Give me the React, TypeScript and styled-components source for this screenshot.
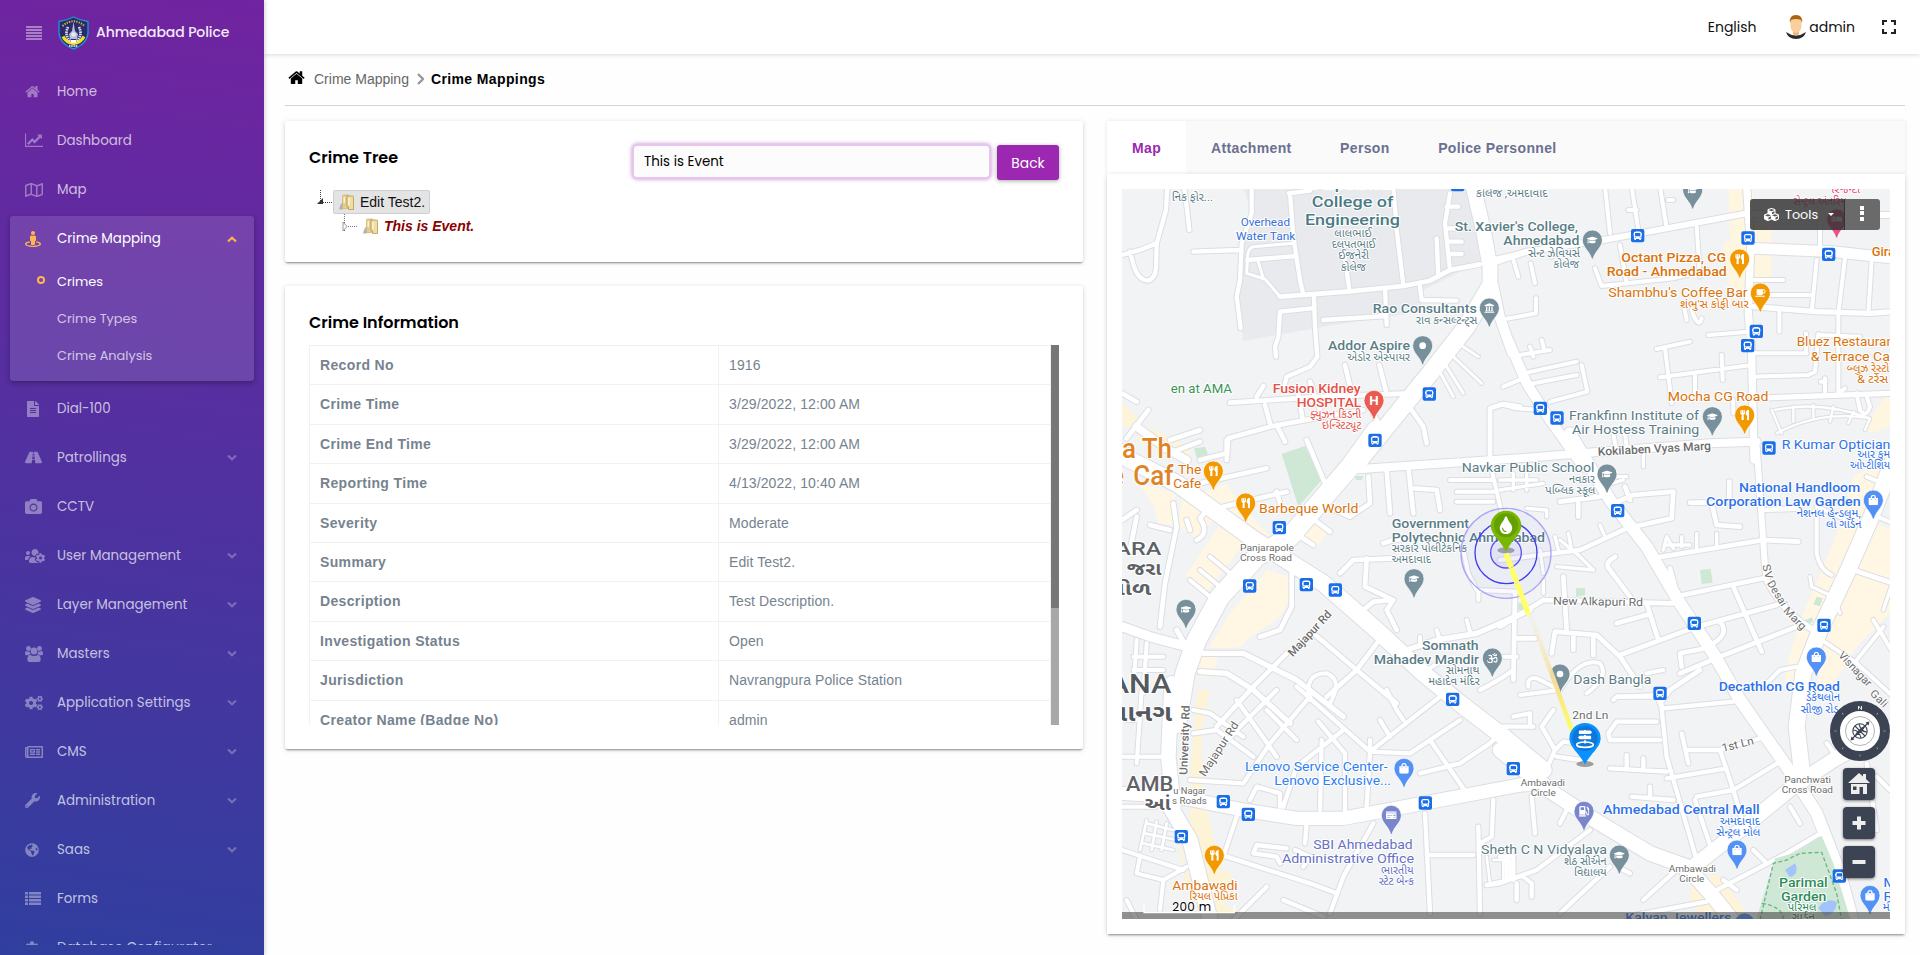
import React from "react";
import styled, { createGlobalStyle } from "styled-components";
import {
  FaRegMap, FaStreetView, FaFileAlt, FaRoad, FaCamera, FaUsersCog, FaLayerGroup, FaCogs, FaRegNewspaper,
  FaWrench, FaGlobeAmericas, FaCog, FaCubes, FaUtensils, FaCoffee, FaGraduationCap, FaUniversity,
  FaShoppingBag, FaGasPump, FaBus, FaMapSigns, FaTint, FaBed, FaOm, FaMoneyCheck,
} from "react-icons/fa";

const ui = `Poppins, Inter, "Noto Sans", sans-serif`;
const arial = `Arial, "Liberation Sans", sans-serif`;

const Global = createGlobalStyle`
  * { box-sizing: border-box; }
  body { margin: 0; background: #fefefe; font-family: ${arial}; font-size: 14px; color: #000; overflow: hidden; }
`;

const Page = styled.div`
  display: flex;
  width: 1920px;
  height: 955px;
  overflow: hidden;
`;

/* ---------- Sidebar ---------- */
const Sidebar = styled.aside`
  width: 264px;
  height: 955px;
  flex: none;
  background: linear-gradient(188deg, #7123a0 0%, #303f9f 100%);
  box-shadow: 0 0 5px rgba(0, 0, 0, 0.25);
  font-family: ${ui};
  z-index: 2;
`;
const Brand = styled.div`
  height: 66px;
  display: flex;
  align-items: center;
  padding-left: 26px;
  padding-bottom: 2px;
  color: #f3e9f8;
  font-size: 14px;
  font-weight: 500;
  letter-spacing: -0.1px;
  svg:first-child { margin: 2px 16px 0 0; }
  svg:nth-child(2) { margin: 1px 7px 0 0; }
`;
const Nav = styled.nav`
  height: 879px;
  padding-top: 1px;
  overflow: hidden;
`;
const NavItem = styled.div<{ $active?: boolean }>`
  display: flex;
  align-items: center;
  height: ${(p) => (p.$active ? 46 : 49)}px;
  padding: 0 ${(p) => (p.$active ? 17 : 27)}px 0 ${(p) => (p.$active ? 15 : 25)}px;
  color: ${(p) => (p.$active ? "#fff" : "rgba(255,255,255,.7)")};
  font-size: 13.4px;
`;
const NavIcon = styled.span<{ $active?: boolean }>`
  width: 32px;
  height: 18px;
  display: flex;
  align-items: center;
  font-size: 15px;
  color: ${(p) => (p.$active ? "#ffb74d" : "rgba(255,255,255,.38)")};
`;
const NavText = styled.span`
  flex: 1;
  white-space: nowrap;
`;
const ActiveGroup = styled.div`
  margin: 2px 10px 3px;
  height: 165px;
  border-radius: 3px;
  background: rgba(255, 255, 255, 0.12);
  box-shadow: 0 2px 5px rgba(0, 0, 0, 0.3);
`;
const SubItem = styled.div<{ $active?: boolean }>`
  display: flex;
  align-items: center;
  height: 37px;
  padding: 2px 0 0 27px;
  font-size: 12.9px;
  color: ${(p) => (p.$active ? "#fff" : "rgba(255,255,255,.7)")};
`;
const SubMark = styled.span<{ $active?: boolean }>`
  width: 8px;
  height: 8px;
  margin: 0 12px 4px 0;
  border-radius: 50%;
  border: 2px solid ${(p) => (p.$active ? "#ffb74d" : "transparent")};
`;

/* ---------- Main ---------- */
const Main = styled.main`
  flex: 1;
  display: flex;
  flex-direction: column;
`;
const Header = styled.header`
  height: 54px;
  display: flex;
  align-items: center;
  justify-content: flex-end;
  padding-right: 24px;
  background: #fff;
  box-shadow: 0 1px 4px rgba(0, 0, 0, 0.14);
  font-family: ${ui};
  font-size: 14px;
  color: #111;
`;
const HeaderText = styled.span<{ $gap: number }>`
  margin-right: ${(p) => p.$gap}px;
`;
const Crumbs = styled.div`
  display: flex;
  align-items: center;
  height: 52px;
  margin: 0 15px 15px 21px;
  padding: 0 0 1px 3px;
  border-bottom: 1px solid #d3d3d3;
  color: #666;
  svg:first-child { margin: -4px 9px 0 0; color: #000; }
  svg:nth-of-type(2) { margin: 0 7px 0 8px; }
  b { color: #000; letter-spacing: 0.38px; }
`;
const Columns = styled.div`
  display: flex;
  gap: 24px;
  margin-left: 21px;
  align-items: flex-start;
`;
const Left = styled.div`
  width: 798px;
  display: flex;
  flex-direction: column;
  gap: 24px;
`;
const Card = styled.section<{ $h: number }>`
  height: ${(p) => p.$h}px;
  background: #fff;
  border-radius: 2px;
  padding: 23px 24px 0;
  box-shadow: 0 2px 2px -1px rgba(0, 0, 0, 0.38), 0 1px 5px rgba(0, 0, 0, 0.16);
`;
const CardHead = styled.div`
  display: flex;
  height: 40px;
`;
const Title = styled.h2`
  flex: 1;
  margin: 0;
  font: 600 16px/28px ${ui};
`;
const Search = styled.div`
  width: 355px;
  height: 31px;
  margin: 2px 8px 0 0;
  padding-left: 10px;
  border-radius: 3px;
  background: #fcfcfc;
  box-shadow: 0 0 0 2px #e6c6ec, 0 0 4px 2px #c48bd0;
  font: 400 13.4px/31px ${ui};
`;
const BackButton = styled.button`
  width: 62px;
  height: 35px;
  margin-top: 1px;
  padding: 2px 0 0;
  border: 0;
  border-radius: 3px;
  background: #9c27b0;
  color: #fff;
  font: 400 13.8px ${ui};
  box-shadow: 0 1px 4px rgba(0, 0, 0, 0.35);
`;
const Tree = styled.div`
  padding: 6px 0 0 8px;
`;
const TreeRow = styled.div<{ $depth: number }>`
  display: flex;
  align-items: center;
  height: 24px;
  padding-left: ${(p) => p.$depth * 24}px;
`;
const TreeLabel = styled.span<{ $selected?: boolean }>`
  display: flex;
  align-items: center;
  gap: 6px;
  height: 24px;
  padding: 0 4px 0 5px;
  border: 1px solid ${(p) => (p.$selected ? "#cfcfcf" : "transparent")};
  border-radius: 2px;
  background: ${(p) => (p.$selected ? "#e4e4e4" : "none")};
  color: ${(p) => (p.$selected ? "#111" : "#8b0000")};
  font-weight: ${(p) => (p.$selected ? 400 : 700)};
  font-style: ${(p) => (p.$selected ? "normal" : "italic")};
`;
const InfoScroll = styled.div`
  display: flex;
  height: 380px;
  margin-top: -4px;
  overflow: hidden;
`;
const Table = styled.div`
  flex: 1;
  border: solid #f0f1f2;
  border-width: 1px 1px 0 1px;
`;
const TableRow = styled.div`
  display: flex;
  height: 39.4px;
  line-height: 38px;
  border-bottom: 1px solid #f0f1f2;
  color: #76838f;
`;
const KeyCell = styled.div`
  width: 409px;
  padding-left: 10px;
  font-weight: 700;
  letter-spacing: 0.35px;
  border-right: 1px solid #f0f1f2;
`;
const ValueCell = styled.div`
  padding-left: 10px;
  letter-spacing: 0.1px;
`;
const ScrollTrack = styled.div`
  width: 8px;
  background: #a8a8a8;
`;
const ScrollThumb = styled.div`
  height: 263px;
  background: #777;
`;

const Right = styled.div`
  width: 798px;
`;
const Tabs = styled.div`
  display: flex;
  height: 53px;
  background: #fafafa;
  box-shadow: 0 0 4px rgba(0, 0, 0, 0.1);
`;
const Tab = styled.div<{ $active?: boolean }>`
  padding: 0 ${(p) => (p.$active ? 25 : 23.5)}px 0 25px;
  line-height: 54px;
  font-weight: 700;
  letter-spacing: 0.35px;
  color: ${(p) => (p.$active ? "#9c27b0" : "#6b7090")};
  background: ${(p) => (p.$active ? "#fff" : "none")};
`;
const MapCard = styled.section`
  position: relative;
  height: 760px;
  padding: 15px;
  background: #fff;
  box-shadow: 0 2px 2px -1px rgba(0, 0, 0, 0.38), 0 1px 5px rgba(0, 0, 0, 0.16);
  > svg { display: block; }
`;
const MapTools = styled.div`
  position: absolute;
  top: 25px;
  right: 25px;
  display: flex;
  height: 31px;
  border-radius: 3px;
  overflow: hidden;
  font: 400 12.8px/32px ${ui};
  color: #fff;
`;
const ToolsButton = styled.div`
  display: flex;
  align-items: center;
  width: 95px;
  padding-left: 14px;
  gap: 6px;
  background: rgba(50, 50, 50, 0.83);
  border-right: 1px solid #333;
`;
const Caret = styled.span`
  margin-left: 4px;
  border: 3px solid transparent;
  border-top-color: #fff;
  border-bottom: 0;
`;
const MoreButton = styled.div`
  display: flex;
  flex-direction: column;
  align-items: center;
  justify-content: center;
  gap: 1.5px;
  width: 35px;
  padding: 0 1px 3px 0;
  background: #6a6a6a;
  i { width: 4px; height: 4px; background: #fff; }
`;
const MapControls = styled.div`
  position: absolute;
  right: 15px;
  top: 527px;
  width: 60px;
  display: flex;
  flex-direction: column;
  align-items: center;
  gap: 7px;
`;
const MapButton = styled.div`
  width: 32px;
  height: 32px;
  margin-left: -2px;
  display: flex;
  align-items: center;
  justify-content: center;
  border-radius: 4px;
  background: #3c4454;
  box-shadow: 0 1px 3px rgba(0, 0, 0, 0.5);
`;

/* ---------- Small icons ---------- */
const HomeGlyph = ({ size = 15 }: { size?: number }) => (
  <svg width={size} height={size} viewBox="40 200 1710 1360" fill="currentColor" preserveAspectRatio="xMidYMid meet">
    <path d="M1472 992v480q0 26-19 45t-45 19h-384v-384h-256v384h-384q-26 0-45-19t-19-45v-480q0-1 .5-3t.5-3l575-474 575 474q1 2 1 6zm223-69l-62 74q-8 9-21 11h-3q-13 0-21-7l-692-577-692 577q-12 8-24 7-13-2-21-11l-62-74q-8-10-7-23.5t11-21.5l719-599q32-26 76-26t76 26l244 204v-195q0-14 9-23t23-9h192q14 0 23 9t9 23v408l219 182q10 8 11 21.5t-7 23.5z" />
  </svg>
);
const LineChart = () => (
  <svg width="18" height="15" viewBox="0 0 2048 1600" fill="currentColor">
    <path d="M2048 1408v128h-2048v-1536h128v1408h1920zM1920 160v435q0 21-19.5 29.5t-35.5-7.5l-121-121-633 633q-10 10-23 10t-23-10l-233-233-416 416-192-192 585-585q10-10 23-10t23 10l233 233 464-464-121-121q-16-16-7.5-35.5t29.5-19.5h435q14 0 23 9t9 23z" />
  </svg>
);
const MenuGlyph = () => (
  <svg width="16" height="14" viewBox="0 0 16 14" fill="rgba(255,255,255,.42)">
    {[0, 3, 6, 9, 12].map((y) => <rect key={y} y={y} width="16" height="2" />)}
  </svg>
);
const ListGlyph = () => (
  <svg width="16" height="13" viewBox="0 0 16 13" fill="currentColor">
    {[0, 3.5, 7, 10.5].map((y) => <path key={y} d={`M0 ${y}h3v2.500h-3z M4 ${y}h12v2.500h-12z`} />)}
  </svg>
);
const GroupGlyph = () => (
  <svg width="18" height="16" viewBox="0 0 18 16" fill="currentColor">
    <circle cx="3.500" cy="2.500" r="2.400" />
    <circle cx="14.500" cy="2.500" r="2.400" />
    <circle cx="9" cy="5" r="3.400" />
    <path d="M0 8 Q0 5 1.500 5 Q3.500 6 4.800 5.400 Q5 7.200 6 8.300 Q4.500 8.300 3.600 9.300 H1.500 Q0 9.300 0 8Z M18 8 Q18 5 16.500 5 Q14.500 6 13.200 5.400 Q13 7.200 12 8.300 Q13.500 8.300 14.400 9.300 H16.500 Q18 9.300 18 8Z" />
    <path d="M2.300 13.500 Q2.300 9 5.300 9 Q9 11 12.700 9 Q15.700 9 15.700 13.500 Q15.700 16 13.300 16 H4.700 Q2.300 16 2.300 13.500Z" />
  </svg>
);
const Badge = () => (
  <svg width="31" height="34" viewBox="0 0 31 34">
    <path d="M1 5.500 Q9 4.500 15.500 1 Q22 4.500 30 5.500 V17 Q29 28 15.500 33 Q2 28 1 17Z" fill="#2b2a6b" stroke="#1f8fd6" strokeWidth="1.400" />
    <path d="M4.500 10 Q15.500 .5 26.500 10" fill="none" stroke="#c9bc33" strokeWidth="2" strokeDasharray="1.300 1.200" />
    <path d="M5 20.500 Q8 26.500 15.500 27.500 Q23 26.500 26 20.500" fill="none" stroke="#f2e21c" strokeWidth="3.200" />
    <path d="M10 11 Q6 19 12.500 25.500 M21 11 Q25 19 18.500 25.500" fill="none" stroke="#dfe3f2" strokeWidth="2.600" strokeDasharray="1.500 .8" />
    <path d="M15.500 6 L16.500 12 L17 15 L20 18 L19 23 H12 L11 18 L14 15 L14.500 12Z" fill="#b9bdd8" />
    <circle cx="15.500" cy="18.500" r="2.200" fill="#e9ebf7" />
    <path d="M13 24 H18 V27 H13Z" fill="#fff" />
    <path d="M11 30 H20" stroke="#fff" strokeWidth="1.500" strokeDasharray="1.500 .7" />
  </svg>
);
const Chevron = ({ up }: { up?: boolean }) => (
  <svg width="10" height="7" viewBox="0 0 10 7" fill="none" stroke={up ? "#ffb74d" : "rgba(255,255,255,.28)"} strokeWidth="2.200">
    <path d={up ? "M1 5.500 L5 1.800 L9 5.500" : "M1 1.500 L5 5.200 L9 1.500"} />
  </svg>
);
const Avatar = () => (
  <svg width="20" height="24" viewBox="0 0 20 24">
    <path d="M0 17 Q10 24 20 17 Q18 24 10 24 Q2 24 0 17Z" fill="#2b2b2b" />
    <path d="M7 14h6v5q-3 3-6 0z" fill="#eeb57e" />
    <path d="M4.500 5 Q10 0 15.500 5 V11 Q15 17 10 18 Q5 17 4.500 11Z" fill="#fbcf9d" />
    <path d="M4 8 Q3 0 10 0 Q17 0 16 8 L15 5 Q10 3 5 5Z" fill="#a8640f" />
  </svg>
);
const Folder = () => (
  <svg width="15" height="17" viewBox="0 0 15 17">
    <path d="M0 15.500 Q1 10 4 8 V15.500Z" fill="#b4b4b4" />
    <path d="M3.500 2 Q3.500 1 4.500 1 H9.500 V14.500 H3.500Z" fill="#e3cd92" stroke="#cdb26b" strokeWidth=".7" />
    <path d="M8 2 H13.500 Q14.500 2 14.500 3 V15.500 H9.500 V13 H8Z" fill="#f0dda0" stroke="#b08d45" strokeWidth=".7" />
    <path d="M10 4 V11 M5.200 3 V9" stroke="#fffbe8" strokeWidth="1.200" />
  </svg>
);

/* ---------- Map drawing: every tile uses 3 units per pixel ---------- */
type Tile = "A" | "B" | "C" | "D" | "E" | "F";
const origin: Record<Tile, [number, number]> = {
  A: [-36, -27], B: [1134, -27], C: [-36, 753], D: [1134, 753], E: [-36, 1503], F: [1134, 1503],
};
const at = (t: Tile) => `translate(${origin[t][0]} ${origin[t][1]})`;

const areas: [Tile, string, string][] = [
  ["A", "#e8eaee", "M400 20 L1080 20 L1110 245 L1020 290 L940 330 L930 395 L640 440 L400 483 L385 330 L400 190 L425 100Z"],
  ["A", "#fdf4da", "M36 670 L85 715 L60 745 L36 735Z M75 775 L120 745 L240 800 L240 830 L180 835Z"],
  ["A", "#cfe8d6", "M252 805 L285 800 L295 826 L260 833Z"],
  ["B", "#fff6e0", "M685 20 L760 20 L765 240 L745 330 L690 330 L670 190 L690 180Z M762 95 h52 v215 h-52z M1155 650 L1170 650 V740 L1110 760 L1100 730Z"],
  ["C", "#fff7e3", "M85 130 L195 160 L190 255 L145 250 L130 195Z M215 175 L310 240 L260 295 L205 260Z M265 165 L345 130 L400 200 L480 290 L410 290 L300 200Z M335 245 L410 300 L290 460 L225 410Z M590 235 L655 270 L620 325 L555 290Z M500 385 L640 390 L625 420 L560 395Z M470 390 L540 410 L540 470 L510 530 L410 600 L390 622 L295 625 L360 520 L440 430Z M270 645 L325 645 L310 710 L265 710Z"],
  ["C", "#cfe8d6", "M515 42 L585 18 L635 120 L565 200Z M735 108 L760 108 L755 120 L738 120Z"],
  ["D", "#fff7e3", "M1060 110 L1150 60 L1170 60 L1100 230 L1030 390 L930 580 L890 700 L860 680 L900 540 L1000 310Z M1110 240 L1170 270 L1170 520 L1070 620 L1020 700 L950 780 L960 600 L1060 400Z M860 680 h40 v60 h-45z"],
  ["D", "#cfe8d6", "M600 390 L632 386 L638 428 L605 432Z M228 444h27v22l-27 4z M950 470l18 5l-8 24l-20-6z M915 540l22-8l2 14l-20 6z M55 490h20l-5 20h-15z"],
  ["E", "#fdf3d6", "M158 140h20v80h-20z M262 0 L300 0 L275 120 L275 300 L335 540 L365 550 L345 650 L400 665 L280 690 L240 400 L240 260Z M180 360 L250 600 L250 690 L200 440Z"],
  ["F", "#fff4d8", "M575 590 L650 550 L740 670 L745 690 L620 690 L570 640Z"],
];

const roads: [Tile, number, string][] = [
  ["A", 13, "M172 20 L168 90 L140 190 L95 208 L36 225 M60 215 L72 260 Q85 300 115 302 Q135 295 138 265 L140 190 M222 20 L230 80 L238 150 M425 20 L425 100 L395 190 L390 300 L380 350 L392 445 M250 215 L390 210 M540 40 L550 170 L570 300 L580 345 M412 240 L560 228 M536 40 L600 32 M700 200 L718 330 M850 20 L860 150 L880 315 M612 350 L615 440 L622 530 L600 560 L530 590 L520 630 M605 385 L510 395 L505 470 L495 500 L498 530 M640 420 L830 408 M825 325 L830 435 M930 320 L935 360 L1040 362 M980 175 L985 290 M1020 40 L1005 130 L1020 270 M1010 80h35 M1015 145h35 M1015 185h40 M1020 222h35"],
  ["A", 9, "M445 245 L460 297 M550 190 L430 200 Q412 205 412 240 L410 280 L465 297 L510 350"],
  ["A", 14, "M510 350 L720 334 L880 318 L960 302 L1020 270 L1110 253 M1145 240 L1250 215 M360 668 L640 650 L900 640 M440 650 L460 618 M705 555 L725 640 M808 555 L830 640 M465 675 L480 730 M500 735 L525 785 M565 640 L578 720 M600 605 L630 690 M350 840 L355 775 L480 740 L640 710 L760 690 M180 780 L270 750 M190 815 L270 785 M36 640 L80 665 M50 775 L115 690 M905 690 L940 740 L950 790 M790 700 L810 740 M1140 850 L1140 685 L1180 672 L1230 680"],
  ["A", 9, "M970 540 L1030 650 M1010 560 L1060 640 M1030 530 L1115 610 M1060 500 L1105 530"],
  ["A", 24, "M80 740 L160 800 L230 840"],
  ["A", 44, "M1085 0 L1120 150 L1140 260 L1140 350"],
  ["A", 52, "M1140 320 L1070 440 L960 580 L740 850"],
  ["A", 26, "M1155 330 L1175 430 L1205 520"],
  ["B", 18, "M-10 245 L80 215 L310 180 L500 145 L740 100 L900 110 M1140 105 L1170 105"],
  ["B", 22, "M740 20 L752 200 L745 400 L755 520 L762 840"],
  ["B", 32, "M760 205 L1000 215 L1180 235"],
  ["B", 16, "M760 380 L950 395 L1110 400 L1180 395 M760 655 L1180 640"],
  ["B", 12, "M315 20 L330 160 M395 20 L415 150 M480 20 L500 145 M505 60 h15 M385 90 h25 M590 140 L600 290 M360 195 L378 300 M285 265 L305 318 L520 295 L620 270 M960 130 L960 200 M950 240 L935 395 M1035 235 L1015 400 L1015 640 M1115 240 L1105 400 M755 300 h95 M760 345 h170 M838 395 v60 M550 370 L560 420 M575 390 Q595 450 605 415 M625 465 L745 455 M470 507 L570 485 M495 505 L515 670 M665 525 L668 600 M480 592 L755 555 M585 580 v60 M755 520 L920 520 M918 460 v60 M955 462 L945 575 L925 585 L760 590 M975 595 v40 M962 605h15 M1070 640 L1080 690 Q1100 715 1110 680 L1100 650 M960 465 L1080 470 M1015 640 L1035 625 M92 250 L105 310 M40 240 L55 290 M150 200 L155 230"],
  ["B", 7, "M825 690 Q960 660 1110 715 M830 760 Q960 690 1110 715 M815 690 L845 760 M880 680 v45 M940 675 v45 M1000 680 l-10 45 M1060 695 l-15 35 M1110 715 L1095 750"],
  ["B", 12, "M0 420 L108 400 L108 355 M60 525 L150 510 M90 500 L100 530 M125 480 l8 30 M70 580 L230 545 M90 612 L230 585 M245 555 L262 635 L150 665 M10 620 L80 590 M0 672 L50 685 L120 690 M340 760 L350 820 M375 760 L380 800 M700 660 L700 700"],
  ["B", 30, "M-30 330 L20 470 L80 610 L150 720 L250 860"],
  ["C", 24, "M740 88 L1230 55 L1470 35 L1800 10 L1940 5"],
  ["C", 14, "M190 190 L200 260 L165 430 L150 560 M36 240 L80 210 M120 255 L180 270 M60 330 L80 230 M545 380 L545 500 L510 570 L450 590 M610 580 L740 690 L860 790 M800 610 L740 690 L650 770 M530 640 L430 740 L320 860 M690 400 L730 360 L850 355 M770 355 L765 440 L850 480 L830 510 L860 570 M760 510 L790 485 L850 480 M690 490 L750 530 M830 90 L840 220 M895 80 L910 220 M915 145 L980 150 L990 210 M775 110 L780 190 L720 230 L640 195 M590 0 L645 130 M320 205 L530 155 M500 155 L510 190 M270 130 L470 85 M600 230 L660 275 M555 280 L610 315 M240 270 L230 240 M350 0 L350 40 L270 60 M300 200 L270 235 Q300 280 260 300 M820 310 L850 300 L950 290"],
  ["C", 16, "M860 640 L980 600 L1100 580 L1170 550 L1260 510 M280 640 L400 640 L560 720 L700 830 M270 695 L350 700 L430 750 L540 850 M240 640 L200 570"],
  ["C", 12, "M980 570 L990 600 M1070 540 L1080 575 M1140 0 v60 M1145 90 L1180 240 M1020 120h130 M1040 155h110 M1040 185h110 M1060 330 L1075 400 L1100 450 L1230 455 M1105 450 v30 M930 590 v20 M80 600 L70 750 M110 610 L100 760 M70 650h90 M70 690h90 M240 420 L300 470 M270 390 L330 440 M300 350 L360 400 M1180 650 h40 M950 690 L1000 660 M600 780 Q580 700 650 700 Q700 720 660 790"],
  ["C", 28, "M36 560 L120 590 L250 625"],
  ["C", 50, "M-20 0 L60 60 L200 130 L420 290 L520 355 L640 430 L800 570 L940 700 L1050 790 L1180 890 L1300 990"],
  ["C", 58, "M800 -30 L720 80 L540 290 L440 350 L330 470 L260 600 L225 700 L200 850"],
  ["D", 14, "M0 560 L130 480 L520 490 M455 355 L790 300 L895 305 M535 468 L790 415 M790 210 L900 205 M360 645 L590 560 L830 495 M350 550 L440 525 M440 490 L475 600 M700 440 L785 635 M540 700 L660 650 L890 560 M640 620 L540 640 L545 680 M660 545 Q690 580 640 610 M480 790 L510 750 L600 690 M190 410 L200 570 M155 640 L165 575 L290 585 L360 650 L420 740 M220 590v40 M280 590v55 M345 350 Q310 370 330 390 L390 470 M340 190 L400 165 L520 155 L515 235 L380 265 L240 330 L0 360 M375 140 L390 180 M180 185 L300 170 M235 190v40 M570 188h60 M635 190 L650 255 L720 260 M688 125v60 M45 460 L40 720 M45 595h60 M510 385 L525 440 M1060 390 L1180 430"],
  ["D", 10, "M490 330 L500 290 L520 325 M545 290 v30 M570 315 h-70 M590 280v50 M650 280v40 M165 290 L175 330 M205 280 L215 330 M230 340 L280 390 L170 380 M240 350 L180 300 M300 255 L315 290 M80 205 L140 210 L140 230 M0 120 L110 120 M0 150 L130 130 M40 100 v50 M80 100 v50 M930 410 L935 440 L1000 470 L1020 520 M1150 510 L1180 420 M120 330 L130 400 M130 420 v40 M430 40 v40 M320 110 h60 M300 140 L370 120"],
  ["D", 12, "M950 230 L950 340 Q960 390 995 405 M1040 240 L950 200 M950 590 L1070 670 L1180 770 M1120 540 L1180 640 M1150 560 L1070 660 M800 730 L840 690 L890 680 M85 740 Q80 710 110 715 L180 750 L60 765 M180 750 Q240 650 300 670 Q330 710 260 760 M1100 110 L1170 140 M1110 220 L1180 250 M350 770 L470 765 M440 700 L490 690"],
  ["D", 18, "M770 20 L795 380 L800 420 Q850 520 940 570"],
  ["D", 36, "M210 -20 L330 180 L440 320 L540 490 L640 640 L720 780 L860 980 L950 1120 L1020 1300 L1060 1450"],
  ["D", 48, "M1180 60 L1110 240 L1040 400 L960 570 L910 700 L890 860 L905 990"],
  ["E", 13, "M390 350 L340 500 M350 500 L600 580 L680 610 M790 400 L700 560 L660 670 M590 400 L585 460 M945 370 L960 670 M1105 410 L1110 670 M950 495 h140 M1150 330 L1145 440 L1110 460 M930 250 L1050 220 L1140 160 L1190 110 M960 150 L1070 310 M520 350 L560 230 L700 120 M560 -10 L780 185 L900 190 L1050 90 M780 185 L990 20 M780 185 L770 350 M705 190 L705 370 M635 150 L630 360 M625 95 L705 190 M380 30 L500 200 M250 60 L300 70 L400 140 M250 130 L320 120 L430 200 M470 60 L560 150 M810 90 L840 140 M780 150 v30 M500 0 L390 110 L310 200 M240 270 L400 280 L480 160 L600 20 M830 0 L860 60 L880 90 M420 330 L440 290 L510 310 L510 350 M430 490 L440 465 L530 475 M430 490 L500 500 L510 520 M555 480 L600 500 L580 530 M520 630 L640 680 M370 690 L470 590"],
  ["E", 12, "M95 0 L80 220 M36 200 h130 M50 90 h40 M36 480 L220 540 M90 500 L80 550 L160 570 L230 530 M160 570 L150 660 M50 630 L80 690 M36 350 h100"],
  ["E", 8, "M110 400 L190 420 M105 430 L200 450 M100 460 L190 480 M110 390 L90 480 M140 395 L125 480 M170 400 L155 480 M1130 500 L1140 580 L1240 560 M1150 510h50v50 M1180 510v60"],
  ["E", 46, "M180 350 L240 450 L300 690"],
  ["E", 40, "M36 310 L200 320 L400 360 L560 385 L700 385 L860 355 L1230 285 L1300 280"],
  ["E", 44, "M185 -20 L175 200 L190 350"],
  ["F", 13, "M95 320 L105 430 M270 420 L110 540 L0 580 L-40 585 M330 530 L180 670 M50 580v50 M70 560 L95 580 V620 M340 30 L350 20 L470 20 L490 55 L700 35 M480 10 L500 200 L590 510 M330 150 L480 150 M470 95 L350 95 L325 130 L330 150 M330 235 L500 245 M380 195 v40 M430 205 v35 M395 320 L520 330 M450 290v30 M545 130 L565 220 M560 180 L660 180 L700 300 L840 215 M500 265 L680 235 M590 320 L700 300 L735 420 M585 330 L635 480 M660 180 L780 145 M180 400 L200 360 M870 350 L900 400 M160 60 L125 110 L165 180 L125 270 M165 180 L190 155 L230 160 M170 200 L240 210 M430 630 L540 530 M670 570 L710 600 M380 680 L620 635 M760 480 L800 520 M370 540 L390 550 M0 110 L100 110 M40 80 L90 70 L90 110 M0 500 h40 M20 510 v60 M40 510 v60 M-60 0 Q0 -30 40 -60"],
  ["F", 13, "M650 600 L860 490 L970 425 M1100 220 L1130 420 M1130 260 L1170 300 M980 160 L1010 200"],
  ["F", 44, "M0 180 L130 290 L300 400 L450 490 L560 530 L640 620 L720 720"],
  ["F", 44, "M560 545 L720 420 L880 290 L1000 210 L1180 110"],
];

const slate = "#5b7d87", orange = "#d9730d", blue = "#2f72e8", grey = "#6d6d6d";
type Label = [Tile, number, number, number, string, number, string, (number | undefined)?, number?];
// tile, x, baseline, text width, text, size, colour, weight, rotation
const labels: Label[] = [
  ["A", 605, 80, 245, "College of", 46, "#4a7a84", 500],
  ["A", 585, 134, 285, "Engineering", 46, "#4a7a84", 500],
  ["A", 600, 28, 245, "Dalpatbhai", 44, "#4a7a84", 500],
  ["A", 673, 170, 112, "લાલભાઈ", 34, slate],
  ["A", 665, 204, 132, "દલપતભાઈ", 34, slate],
  ["A", 685, 238, 92, "ઈજનેરી", 34, slate],
  ["A", 692, 272, 76, "કોલેજ", 34, slate],
  ["A", 185, 62, 124, "નિક ફોર...", 34, slate],
  ["A", 392, 138, 148, "Overhead", 35, "#3a6fd8"],
  ["A", 378, 181, 178, "Water Tank", 35, "#3a6fd8"],
  ["A", 1098, 52, 215, "કોલેજ ,અમદાવાદ", 32, slate],
  ["A", 1034, 153, 370, "St. Xavier's College,", 41, slate, 500],
  ["B", 10, 196, 228, "Ahmedabad", 41, slate, 500],
  ["B", 84, 230, 156, "સેન્ટ ઝેવિયર્સ", 34, slate],
  ["B", 160, 265, 78, "કોલેજ", 34, slate],
  ["A", 788, 400, 312, "Rao Consultants", 41, slate, 500],
  ["A", 918, 431, 184, "રાવ કન્સલ્ટન્ટ્સ", 34, slate],
  ["A", 654, 511, 246, "Addor Aspire", 40, slate, 500],
  ["A", 712, 543, 188, "એડોર એસ્પાયર", 34, slate],
  ["A", 182, 640, 184, "en at AMA", 38, "#3b9455"],
  ["A", 488, 638, 264, "Fusion Kidney", 40, "#e4524a", 500],
  ["A", 560, 680, 194, "HOSPITAL", 40, "#e4524a", 500],
  ["A", 600, 714, 154, "ફ્યુઝન કિડની", 34, "#e4524a"],
  ["A", 636, 747, 118, "ઇન્સ્ટિટ્યૂટ", 34, "#e4524a"],
  ["A", 36, 835, 150, "a Th", 84, "#df8426", 500],
  ["C", 4, 136, 38, "e", 84, "#df8426", 500],
  ["C", 70, 136, 120, "Caf", 84, "#df8426", 500],
  ["C", 204, 102, 70, "The", 40, orange],
  ["C", 190, 144, 84, "Cafe", 40, orange],
  ["B", 994, 40, 86, "રિજેન્ટા", 34, "#e8457f"],
  ["B", 880, 74, 160, "સેન્ટ્રલ અંતરિમ", 34, "#e8457f"],
  ["B", 364, 247, 314, "Octant Pizza, CG", 41, orange, 500],
  ["B", 320, 289, 360, "Road - Ahmedabad", 41, orange, 500],
  ["B", 325, 352, 418, "Shambhu's Coffee Bar", 41, orange, 400],
  ["B", 540, 384, 206, "શંભુ'સ કોફી બાર", 34, orange],
  ["B", 1115, 228, 70, "Gira", 41, orange, 500],
  ["B", 890, 499, 305, "Bluez Restaurant", 41, orange, 400],
  ["B", 932, 542, 274, "& Terrace Cafe", 41, orange, 400],
  ["B", 1040, 577, 128, "બ્લુઝ રેસ્ટો", 34, orange],
  ["B", 1072, 610, 92, "& ટર્રેસ", 34, orange],
  ["B", 503, 662, 302, "Mocha CG Road", 40, orange],
  ["B", 207, 720, 390, "Frankfinn Institute of", 40, slate],
  ["B", 216, 762, 382, "Air Hostess Training", 40, slate],
  ["B", 294, 827, 340, "Kokilaben Vyas Marg", 35, grey, 500, -3],
  ["B", 845, 807, 348, "R Kumar Opticians", 40, blue],
  ["B", 1072, 835, 98, "આર કુમ", 34, blue],
  ["D", 1050, 86, 120, "ઓપ્ટીશિય", 34, blue],
  ["D", 717, 156, 364, "National Handloom", 41, blue, 500],
  ["D", 618, 198, 464, "Corporation Law Garden", 41, blue, 500],
  ["D", 890, 231, 192, "નેશનલ હેન્ડલુમ,", 34, blue],
  ["D", 978, 265, 106, "લો ગાર્ડન", 34, blue],
  ["C", 1055, 97, 398, "Navkar Public School", 40, slate, 400],
  ["D", 207, 129, 78, "નવકાર", 34, slate],
  ["D", 136, 162, 150, "પબ્લિક સ્કૂલ", 34, slate],
  ["C", 447, 219, 298, "Barbeque World", 41, orange],
  ["C", 390, 332, 162, "Panjarapole", 29, grey],
  ["C", 390, 362, 156, "Cross Road", 29, grey],
  ["C", 845, 263, 232, "Government", 40, slate, 500],
  ["C", 845, 306, 460, "Polytechnic Ahmedabad", 40, slate, 500],
  ["C", 845, 337, 226, "સરકાર પોલીટેકનિક", 34, slate],
  ["C", 845, 370, 118, "અમદાવાદ", 34, slate],
  ["C", 16, 346, 138, "ARA", 56, "#5e6266", 500],
  ["C", 50, 406, 104, "જરા", 54, "#5e6266", 700],
  ["C", 0, 466, 124, "પોળ", 54, "#5e6266", 700],
  ["C", -4, 760, 188, "ANA", 80, "#555a5e", 500],
  ["E", 0, 92, 186, "વાનગ", 70, "#555a5e", 700],
  ["E", 48, 302, 142, "AMB", 60, "#5e6266", 500],
  ["E", 104, 360, 78, "આં", 54, "#5e6266", 700],
  ["C", 548, 652, 174, "Majapur Rd", 34, grey, 500, -47],
  ["E", 232, 255, 208, "University Rd", 34, grey, 500, -88],
  ["E", 285, 262, 188, "Majapur Rd", 34, grey, 400, -57],
  ["C", 936, 629, 170, "Somnath", 41, slate, 500],
  ["C", 791, 672, 316, "Mahadev Mandir", 41, slate, 500],
  ["C", 1008, 702, 100, "સોમનાથ", 34, slate],
  ["C", 955, 735, 154, "મહાદેવ મંદિર", 34, slate],
  ["D", 159, 494, 270, "New Alkapuri Rd", 34, grey, 400, 1],
  ["D", 220, 732, 234, "Dash Bangla", 40, slate, 400],
  ["D", 787, 376, 44, "SV", 33, grey, 400, 76],
  ["D", 800, 430, 84, "Desai", 33, grey, 400, 58],
  ["D", 848, 514, 82, "Marg", 33, grey, 400, 45],
  ["D", 1013, 647, 130, "Visnagar", 33, grey, 400, 47],
  ["F", 1108, 12, 60, "Gali", 33, grey, 400, 45],
  ["D", 656, 753, 364, "Decathlon CG Road", 40, blue, 500],
  ["F", 918, 34, 102, "ડેકેથલોન", 34, blue],
  ["F", 902, 70, 114, "સીજી રોડ", 34, blue],
  ["F", 217, 87, 108, "2nd Ln", 34, grey],
  ["F", 668, 186, 98, "1st Ln", 34, grey, 400, -14],
  ["E", 190, 312, 98, "u Nagar", 29, grey],
  ["E", 186, 343, 104, "s Roads", 29, grey],
  ["E", 405, 244, 428, "Lenovo Service Center-", 40, "#2f80f0"],
  ["E", 493, 286, 350, "Lenovo Exclusive...", 40, "#2f80f0"],
  ["E", 610, 478, 298, "SBI Ahmedabad", 40, "#6670c4"],
  ["E", 516, 520, 396, "Administrative Office", 40, "#6670c4"],
  ["E", 813, 553, 98, "ભારતીય", 34, "#6670c4"],
  ["E", 806, 586, 106, "સ્ટેટ બેન્ક", 34, "#6670c4"],
  ["E", 187, 600, 196, "Ambawadi", 40, orange],
  ["E", 238, 630, 145, "રિયલ પેપ્રિકા", 32, orange],
  ["E", 1113, 493, 378, "Sheth C N Vidyalaya", 40, slate, 400],
  ["F", 192, 526, 128, "શેઠ સીએન", 33, slate],
  ["F", 222, 558, 98, "વિદ્યાલય", 33, slate],
  ["F", 62, 288, 133, "Ambavadi", 29, grey],
  ["F", 92, 317, 75, "Circle", 29, grey],
  ["F", 309, 373, 470, "Ahmedabad Central Mall", 41, blue, 500],
  ["F", 660, 406, 120, "અમદાવાદ", 34, blue],
  ["F", 649, 439, 132, "સેન્ટ્રલ મોલ", 34, blue],
  ["F", 506, 547, 142, "Ambawadi", 29, grey],
  ["F", 538, 576, 75, "Circle", 29, grey],
  ["F", 853, 280, 140, "Panchwati", 29, grey],
  ["F", 845, 309, 154, "Cross Road", 29, grey],
  ["F", 376, 696, 318, "Kalyan Jewellers", 41, blue, 500],
  ["F", 837, 591, 146, "Parimal", 41, "#2e8b57", 500],
  ["F", 843, 632, 136, "Garden", 41, "#2e8b57", 500],
  ["F", 863, 664, 86, "પરિમલ", 34, "#2e8b57"],
  ["F", 875, 692, 70, "ગાર્ડન", 34, "#2e8b57"],
  ["F", 1150, 591, 40, "M", 41, blue],
  ["F", 1150, 632, 30, "R", 41, blue],
  ["F", 1148, 662, 30, "મી", 34, blue],
];

type Glyph = React.ComponentType<{ x?: number; y?: number; size?: number; color?: string }>;
const teal = "#78909c", amber = "#f29900", azure = "#5491f5", violet = "#7986cb";
const pins: [Tile, number, number, string, Glyph | string][] = [
  ["A", 1138, 384, teal, FaUniversity], ["A", 938, 497, teal, "dot"], ["A", 792, 661, "#ea5a50", "H"],
  ["B", 578, 30, teal, FaGraduationCap], ["B", 277, 180, teal, FaGraduationCap], ["B", 719, 237, amber, FaUtensils],
  ["B", 781, 339, amber, FaCoffee], ["B", 1010, 117, "#ec4f87", FaBed], ["B", 637, 710, teal, FaGraduationCap],
  ["B", 734, 705, amber, FaUtensils], ["C", 310, 93, amber, FaUtensils], ["C", 407, 189, amber, FaUtensils],
  ["C", 912, 416, teal, FaGraduationCap], ["C", 228, 508, teal, FaGraduationCap], ["C", 1147, 654, teal, FaOm],
  ["D", 321, 102, teal, FaGraduationCap], ["D", 1120, 180, azure, FaShoppingBag], ["D", 949, 651, azure, FaShoppingBag],
  ["D", 180, 702, teal, "dot"], ["E", 882, 235, azure, FaShoppingBag], ["E", 844, 376, violet, FaMoneyCheck],
  ["E", 313, 496, amber, FaUtensils], ["F", 252, 364, violet, FaGasPump], ["F", 358, 495, teal, FaGraduationCap],
  ["F", 711, 480, azure, FaShoppingBag], ["F", 1110, 616, azure, FaShoppingBag], ["F", 734, 699, azure, "dot"],
];
const stops: [Tile, number, number][] = [
  ["A", 1043, 14], ["A", 958, 642], ["A", 795, 781], ["B", 413, 167], ["B", 744, 174], ["B", 986, 223], ["B", 769, 454],
  ["B", 743, 497], ["B", 121, 685], ["B", 171, 714], ["B", 807, 804], ["C", 508, 263], ["C", 419, 438], ["C", 589, 434],
  ["C", 676, 450], ["C", 1028, 778], ["D", 353, 212], ["D", 583, 550], ["D", 972, 556], ["D", 480, 760], ["E", 340, 335],
  ["E", 415, 373], ["E", 214, 440], ["E", 946, 339], ["E", 1210, 236], ["F", 1018, 558],
];

const drawRoads = (casing: boolean) =>
  roads.map(([t, w, d], i) => (
    <path key={i} transform={at(t)} d={d} fill="none" stroke={casing ? "#dcdee3" : "#fff"} strokeWidth={casing ? w + 6 : w}
      strokeLinecap="round" strokeLinejoin="round" />
  ));

const Pin = ({ x, y, color, glyph: G }: { x: number; y: number; color: string; glyph: Glyph | string }) => (
  <g transform={`translate(${x} ${y})`}>
    <path d="M-30 0 A30 30 0 1 1 30 0 C30 22 7 34 2 57 H-2 C-7 34 -30 22 -30 0Z" fill={color} stroke="#fff" strokeWidth="2" />
    {G === "dot" ? <circle r="10" fill="#fff" /> :
      typeof G === "string" ? <text y="14" textAnchor="middle" fontFamily="Roboto" fontWeight="700" fontSize="40" fill="#fff">{G}</text> :
      <G x={-16} y={-16} size={32} color="#fff" />}
  </g>
);

const CityMap = () => (
  <svg width="768" height="730" viewBox="0 0 2304 2190">
    <defs>
      <linearGradient id="beam" x1="0" y1="0" x2="0" y2="1">
        <stop offset="0" stopColor="#f3efdf" stopOpacity=".3" />
        <stop offset=".6" stopColor="#f8df98" />
        <stop offset="1" stopColor="#ffff60" />
      </linearGradient>
    </defs>
    <rect width="2304" height="2190" fill="#f1f3f4" />
    {areas.map(([t, c, d], i) => <path key={i} transform={at(t)} fill={c} d={d} />)}
    {drawRoads(true)}
    {drawRoads(false)}
    <g transform={at("F")}>
      <path d="M825 505 L880 490 L965 437 L1000 520 L1055 700 L765 700Z" fill="#cfe8d6" />
      <path d="M780 690 L820 520 L860 510 L900 490 L965 487 L1010 610 L1025 690 M785 640 Q850 650 850 690" fill="none" stroke="#6db583" strokeWidth="4" strokeDasharray="12 7" />
      <path d="M855 540 L885 520 Q900 550 870 562Z M860 630 L885 605 L890 625 L865 642Z M955 655 Q975 620 1010 635 Q1010 670 975 678Z" fill="#a3c4fb" />
    </g>
    {stops.map(([t, x, y], i) => (
      <g key={i} transform={`${at(t)} translate(${x} ${y})`}>
        <rect x="-20" y="-20" width="40" height="40" rx="6" fill="#1a6fe8" />
        <FaBus x={-13} y={-13} size={26} color="#fff" />
      </g>
    ))}
    {labels.map(([t, x, y, w, s, size, color, weight, rot], i) => (
      <text key={i} transform={`${at(t)} translate(${x} ${y}) rotate(${rot || 0})`} textLength={w} fontSize={size}
        fontFamily={`Roboto, "Noto Sans Gujarati", "Noto Sans", sans-serif`} fontWeight={weight || 400} fill={color}
        stroke="#fff" strokeWidth="6" strokeLinejoin="round" paintOrder="stroke" lengthAdjust="spacingAndGlyphs">{s}</text>
    ))}
    {pins.map(([t, x, y, color, g], i) => (
      <Pin key={i} x={x + origin[t][0]} y={y + origin[t][1]} color={color} glyph={g} />
    ))}
    <g transform={at("D")}>
      <circle cx="18" cy="338" r="46" fill="rgba(60,60,255,.05)" stroke="#5a50ee" strokeWidth="4" />
      <circle cx="18" cy="338" r="93" fill="none" stroke="#4038f0" strokeWidth="4" />
      <circle cx="18" cy="340" r="135" fill="rgba(60,60,255,.03)" stroke="#aaa5f5" strokeWidth="4" />
      <path d="M84 525 L96 519 L180 750 L222 870 L210 875 L165 750Z" fill="url(#beam)" />
      <ellipse cx="18" cy="331" rx="26" ry="9" fill="rgba(0,0,0,.3)" />
      <path d="M18 340 L86 525" stroke="#ffff66" strokeWidth="16" strokeDasharray="46 2" />
      <path d="M-28 258 A46 46 0 1 1 64 258 C62 285 34 300 18 336 C2 300 -26 285 -28 258Z" fill="#7ab800" />
      <circle cx="18" cy="256" r="36" fill="#64a000" />
      <FaTint x={-9} y={229} size={54} color="#fff" />
    </g>
    <g transform={at("F")}>
      <ellipse cx="255" cy="222" rx="26" ry="9" fill="rgba(0,0,0,.35)" />
      <path d="M208 146 A47 47 0 1 1 302 146 C300 175 270 190 255 224 C240 190 210 175 208 146Z" fill="#0a90ff" />
      <circle cx="255" cy="145" r="38" fill="#0d76d6" />
      <ellipse cx="255" cy="164" rx="25" ry="8" fill="none" stroke="#fff" strokeWidth="5" />
      <FaMapSigns x={234} y={119} size={42} color="#fff" />
    </g>
    <rect y="2169" width="2304" height="21" fill="rgba(60,60,60,.55)" />
    <path d="M66 2146 V2171 H337 V2146" fill="none" stroke="#fff" strokeWidth="4" />
    <text x="151" y="2165" fontFamily={ui} fontSize="36" textLength="116" stroke="#fff" strokeWidth="5" paintOrder="stroke">200 m</text>
  </svg>
);

const Compass = () => (
  <svg width="60" height="60" viewBox="-30 -30 60 60">
    <circle r="25" fill="#fff" stroke="#3c4454" strokeWidth="10" />
    <circle r="14.500" fill="none" stroke="#777d88" strokeWidth=".6" />
    {[45, 90, 135, 180, 225, 270, 315].map((a) => <rect key={a} x="-.4" y="-25.500" width=".8" height="2" fill="#a3a8b2" transform={`rotate(${a})`} />)}
    <path d="M-1.500 -21.500 V-25 L1.500 -21.500 V-25" stroke="#fff" strokeWidth=".9" fill="none" />
    <g fill="none" stroke="#3c4454" strokeWidth="1.100">
      <circle r="7.200" />
      <path d="M-8.500 8.500 L8.500 -8.500 M-5 -5 L5 5 M-5 5 Q-1.500 -1.500 5 -5 M-5 5 Q1.500 1.500 5 -5 M-7 -1 Q-1 -1 1 7 M-1 -7 Q1 1 7 1" />
    </g>
    <path d="M-9.500 9.500l1-4l3 3z M9.500 -9.500l-1 4l-3-3z" fill="#3c4454" />
  </svg>
);

type NavEntry = { label: string; icon: React.ReactNode; more?: boolean };
const topNav: NavEntry[] = [
  { label: "Home", icon: <HomeGlyph size={15} /> },
  { label: "Dashboard", icon: <LineChart /> },
  { label: "Map", icon: <FaRegMap size={18} /> },
];
const bottomNav: NavEntry[] = [
  { label: "Dial-100", icon: <FaFileAlt size={16} /> },
  { label: "Patrollings", icon: <FaRoad size={17} />, more: true },
  { label: "CCTV", icon: <FaCamera size={17} /> },
  { label: "User Management", icon: <FaUsersCog size={20} />, more: true },
  { label: "Layer Management", icon: <FaLayerGroup size={16} />, more: true },
  { label: "Masters", icon: <GroupGlyph />, more: true },
  { label: "Application Settings", icon: <FaCogs size={18} />, more: true },
  { label: "CMS", icon: <FaRegNewspaper size={18} />, more: true },
  { label: "Administration", icon: <FaWrench size={15} />, more: true },
  { label: "Saas", icon: <FaGlobeAmericas size={14} />, more: true },
  { label: "Forms", icon: <ListGlyph /> },
  { label: "Database Configurator", icon: <FaCog size={14} /> },
];
const info: [string, string][] = [
  ["Record No", "1916"], ["Crime Time", "3/29/2022, 12:00 AM"], ["Crime End Time", "3/29/2022, 12:00 AM"],
  ["Reporting Time", "4/13/2022, 10:40 AM"], ["Severity", "Moderate"], ["Summary", "Edit Test2."],
  ["Description", "Test Description."], ["Investigation Status", "Open"], ["Jurisdiction", "Navrangpura Police Station"],
  ["Creator Name (Badge No)", "admin"],
];

const NavRow = ({ item }: { item: NavEntry }) => (
  <NavItem>
    <NavIcon>{item.icon}</NavIcon>
    <NavText>{item.label}</NavText>
    {item.more && <Chevron />}
  </NavItem>
);

export default function App() {
  return (
    <Page>
      <Global />
      <Sidebar>
        <Brand><MenuGlyph /><Badge />Ahmedabad Police</Brand>
        <Nav>
          {topNav.map((n) => <NavRow key={n.label} item={n} />)}
          <ActiveGroup>
            <NavItem $active>
              <NavIcon $active><FaStreetView size={16} /></NavIcon>
              <NavText>Crime Mapping</NavText>
              <Chevron up />
            </NavItem>
            {["Crimes", "Crime Types", "Crime Analysis"].map((s, i) => (
              <SubItem key={s} $active={i === 0}><SubMark $active={i === 0} />{s}</SubItem>
            ))}
          </ActiveGroup>
          {bottomNav.map((n) => <NavRow key={n.label} item={n} />)}
        </Nav>
      </Sidebar>
      <Main>
        <Header>
          <HeaderText $gap={29}>English</HeaderText>
          <Avatar />
          <HeaderText $gap={27}>&nbsp;admin</HeaderText>
          <svg width="14" height="14" viewBox="0 0 14 14" fill="none" stroke="#222" strokeWidth="2.200">
            <path d="M1 5 V1 H5 M9 1 H13 V5 M13 9 V13 H9 M5 13 H1 V9" />
          </svg>
        </Header>
        <Crumbs>
          <HomeGlyph size={17} />
          <span>Crime Mapping</span>
          <svg width="7" height="12" viewBox="0 0 7 12" fill="none" stroke="#999" strokeWidth="2.400"><path d="M1 1 L6 6 L1 11" /></svg>
          <b>Crime Mappings</b>
        </Crumbs>
        <Columns>
          <Left>
            <Card $h={141}>
              <CardHead>
                <Title>Crime Tree</Title>
                <Search>This is Event</Search>
                <BackButton>Back</BackButton>
              </CardHead>
              <Tree>
                <TreeRow $depth={0}>
                  <svg width="16" height="24" viewBox="0 0 16 24">
                    <path d="M3.500 0 V12 M6 12.500 H16" stroke="#444" strokeDasharray="1 1" />
                    <path d="M0 14 L6 8 V14Z" fill="#333" />
                  </svg>
                  <TreeLabel $selected><Folder />Edit Test2.</TreeLabel>
                </TreeRow>
                <TreeRow $depth={1}>
                  <svg width="16" height="24" viewBox="0 0 16 24">
                    <path d="M3.500 0 V17 M5 12.500 H16" stroke="#777" strokeDasharray="1 1" />
                    <path d="M2 8 L6 12.500 L2 17Z" fill="#fff" stroke="#999" />
                  </svg>
                  <TreeLabel><Folder />This is Event.</TreeLabel>
                </TreeRow>
              </Tree>
            </Card>
            <Card $h={463}>
              <CardHead><Title>Crime Information</Title></CardHead>
              <InfoScroll>
                <Table>
                  {info.map(([k, v]) => <TableRow key={k}><KeyCell>{k}</KeyCell><ValueCell>{v}</ValueCell></TableRow>)}
                </Table>
                <ScrollTrack><ScrollThumb /></ScrollTrack>
              </InfoScroll>
            </Card>
          </Left>
          <Right>
            <Tabs>
              <Tab $active>Map</Tab>
              <Tab>Attachment</Tab>
              <Tab>Person</Tab>
              <Tab>Police Personnel</Tab>
            </Tabs>
            <MapCard>
              <CityMap />
              <MapTools>
                <ToolsButton><FaCubes size={15} />Tools<Caret /></ToolsButton>
                <MoreButton><i /><i /><i /></MoreButton>
              </MapTools>
              <MapControls>
                <Compass />
                <MapButton>
                  <svg width="22" height="22" viewBox="0 0 22 22" fill="#eee">
                    <path d="M0 10 L11 0 L15 3.500 V1 H18 V6 L22 10Z" />
                    <path d="M3 11 H19 V21 H15 V14 H11.500 V21 H3Z M5 13.500 V17 H8.500 V13.500Z" fillRule="evenodd" />
                  </svg>
                </MapButton>
                <MapButton><svg width="14" height="14" viewBox="0 0 14 14"><path d="M7 0.500 V13.500 M0.500 7 H13.500" stroke="#eee" strokeWidth="4" /></svg></MapButton>
                <MapButton><svg width="14" height="14" viewBox="0 0 14 14"><path d="M0.500 7 H13.500" stroke="#eee" strokeWidth="4" /></svg></MapButton>
              </MapControls>
            </MapCard>
          </Right>
        </Columns>
      </Main>
    </Page>
  );
}
